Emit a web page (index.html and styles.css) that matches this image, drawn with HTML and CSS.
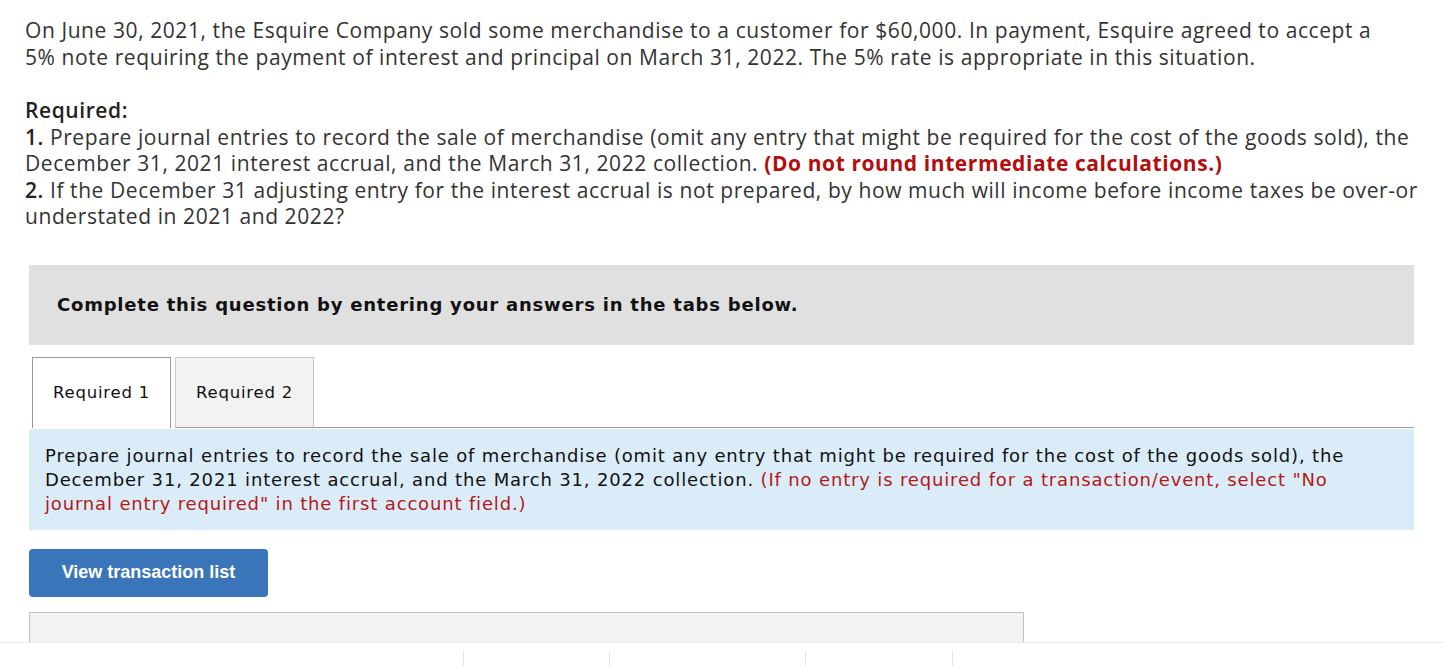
FILE: index.html
```html
<!DOCTYPE html>
<html>
<head>
<meta charset="utf-8">
<link rel="stylesheet" href="styles.css">
</head>
<body>
<div class="page">
  <div class="question">
    <p class="intro">On June 30, 2021, the Esquire Company sold some merchandise to a customer for $60,000. In payment, Esquire agreed to accept a<br>5% note requiring the payment of interest and principal on March 31, 2022. The 5% rate is appropriate in this situation.</p>
    <p class="req">
      <strong>Required:</strong><br>
      <strong>1.</strong> Prepare journal entries to record the sale of merchandise (omit any entry that might be required for the cost of the goods sold), the<br>December 31, 2021 interest accrual, and the March 31, 2022 collection. <strong class="red">(Do not round intermediate calculations.)</strong><br>
      <strong>2.</strong> If the December 31 adjusting entry for the interest accrual is not prepared, by how much will income before income taxes be over-or<br>understated in 2021 and 2022?
    </p>
  </div>

  <div class="work">
    <div class="banner">Complete this question by entering your answers in the tabs below.</div>

    <div class="tabs">
      <div class="tab active">Required 1</div>
      <div class="tab">Required 2</div>
      <div class="tab-fill"></div>
    </div>

    <div class="instructions">Prepare journal entries to record the sale of merchandise (omit any entry that might be required for the cost of the goods sold), the<br>December 31, 2021 interest accrual, and the March 31, 2022 collection. <span class="red">(If no entry is required for a transaction/event, select "No<br>journal entry required" in the first account field.)</span></div>

    <button class="btn">View transaction list</button>

    <div class="panel"></div>
  </div>

  <div class="footer">
    <div class="fcell c1"></div>
    <div class="fcell c2"></div>
    <div class="fcell c3"></div>
    <div class="fcell c4"></div>
    <div class="fcell c5"></div>
  </div>
</div>
</body>
</html>
```

FILE: styles.css
```css
html, body {
  margin: 0;
  padding: 0;
  background: #fff;
}

.page {
  width: 1444px;
  height: 666px;
  overflow: hidden;
  position: relative;
}

.question {
  padding: 17px 0 0 25px;
  font-family: "Open Sans", "Liberation Sans", sans-serif;
  font-size: 21px;
  letter-spacing: 0.58px;
  line-height: 26.5px;
  color: #333;
}

.question p {
  margin: 0;
  white-space: nowrap;
}

.question .intro {
  margin-bottom: 27px;
}

.question strong {
  font-weight: 600;
  color: #222;
}

.question strong.red {
  font-weight: 700;
  color: #b50d0d;
}

.work {
  padding: 35px 30px 0 29px;
}

.banner {
  background: #e0e0e0;
  height: 80px;
  display: flex;
  align-items: center;
  padding-left: 28px;
  font-family: "DejaVu Sans", Verdana, sans-serif;
  font-weight: 700;
  font-size: 18px;
  letter-spacing: 0.78px;
  color: #111;
}

.tabs {
  display: flex;
  align-items: flex-end;
  margin-top: 12px;
  height: 71px;
}

.tab {
  box-sizing: border-box;
  height: 71px;
  width: 139px;
  display: flex;
  align-items: center;
  justify-content: center;
  font-family: "DejaVu Sans", Verdana, sans-serif;
  font-size: 16.5px;
  letter-spacing: 0.8px;
  color: #111;
  background: #f2f2f2;
  border: 1px solid #c8c8c8;
  border-bottom: 1px solid #999;
}

.tab.active {
  background: #fff;
  border: 1px solid #999;
  border-bottom: none;
  margin-left: 3px;
  margin-right: 4px;
}

.tab-fill {
  flex: 1;
  height: 0;
  border-bottom: 1px solid #999;
}

.instructions {
  background: #dbecf9;
  padding: 15px 16px 14px 16px;
  font-family: "DejaVu Sans", Verdana, sans-serif;
  font-size: 18px;
  letter-spacing: 0.84px;
  line-height: 24px;
  color: #111;
  white-space: nowrap;
  margin-top: 1px;
}

.instructions .red {
  color: #b51818;
}

.btn {
  display: block;
  margin-top: 19px;
  width: 239px;
  height: 48px;
  border: none;
  border-radius: 4px;
  background: #3a75b9;
  color: #fff;
  font-family: "Liberation Sans", Arial, sans-serif;
  font-weight: 700;
  font-size: 18px;
  padding: 0;
  letter-spacing: 0;
}

.panel {
  margin-top: 15px;
  width: 995px;
  height: 30px;
  box-sizing: border-box;
  background: #f2f2f2;
  border: 1px solid #c0c0c0;
  border-bottom: none;
}

.footer {
  position: absolute;
  left: 0;
  top: 642px;
  width: 1444px;
  height: 24px;
  background: #fff;
  border-top: 1px solid #ececec;
  display: flex;
  padding-top: 8px;
  box-sizing: border-box;
}

.fcell {
  height: 100%;
}

.c1 { width: 463px; border-right: 1px solid #e6e6e6; }
.c2 { width: 145px; border-right: 1px solid #e6e6e6; }
.c3 { width: 195px; border-right: 1px solid #e6e6e6; }
.c4 { width: 146px; border-right: 1px solid #e6e6e6; }
.c5 { flex: 1; }
```
